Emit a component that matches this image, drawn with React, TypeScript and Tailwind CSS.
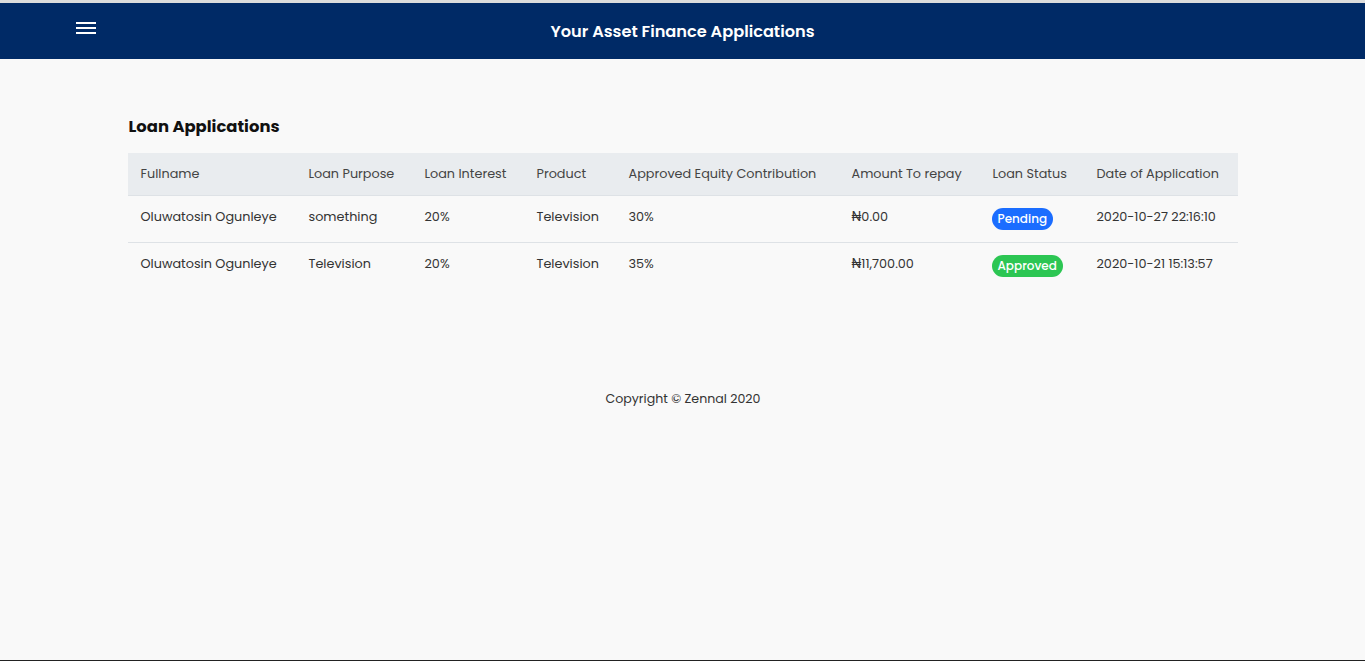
import React from "react";

const rows = [
  {
    name: "Oluwatosin Ogunleye",
    purpose: "something",
    interest: "20%",
    product: "Television",
    equity: "30%",
    amount: "₦0.00",
    status: "Pending",
    date: "2020-10-27 22:16:10",
  },
  {
    name: "Oluwatosin Ogunleye",
    purpose: "Television",
    interest: "20%",
    product: "Television",
    equity: "35%",
    amount: "₦11,700.00",
    status: "Approved",
    date: "2020-10-21 15:13:57",
  },
];

const columns = [
  { label: "Fullname", w: "w-[168px]" },
  { label: "Loan Purpose", w: "w-[116px]" },
  { label: "Loan Interest", w: "w-[112px]" },
  { label: "Product", w: "w-[92px]" },
  { label: "Approved Equity Contribution", w: "w-[223px]" },
  { label: "Amount To repay", w: "w-[141px]" },
  { label: "Loan Status", w: "w-[104px]" },
  { label: "Date of Application", w: "w-[154px]" },
];

export default function App() {
  return (
    <div className="flex min-h-[661px] flex-col bg-[#f9f9f9] font-['Poppins','Inter',sans-serif] text-[#333]">
      {/* Top bar */}
      <div className="h-[3px] bg-[#dcdcdc]" />
      <header className="relative flex h-[56px] items-center justify-center bg-[#002a66] pt-[2px]">
        <button className="absolute left-[76px] top-[19px] flex flex-col gap-[3px]">
          <span className="block h-[2px] w-[20px] bg-white" />
          <span className="block h-[2px] w-[20px] bg-white" />
          <span className="block h-[2px] w-[20px] bg-white" />
        </button>
        <h1 className="text-[16.2px] font-semibold text-white">Your Asset Finance Applications</h1>
      </header>

      <main className="flex-1">
        <div className="mx-auto w-[1110px] pt-[55px]">
          <h2 className="pl-[1px] text-[16.4px] font-bold leading-[26px] text-[#111]">Loan Applications</h2>
          <table className="mt-[13px] w-full table-fixed border-collapse text-[12.8px]">
            <colgroup>
              {columns.map((c) => (
                <col key={c.label} className={c.w} />
              ))}
            </colgroup>
            <thead>
              <tr className="h-[42px] border-b border-[#dee2e6] bg-[#e9ecef]">
                {columns.map((c) => (
                  <th key={c.label} className="pl-[13px] pr-3 text-left font-normal text-[#444]">
                    {c.label}
                  </th>
                ))}
              </tr>
            </thead>
            <tbody>
              {rows.map((r, i) => (
                <tr key={i} className="h-[47px] border-b border-[#dee2e6] last:border-b-0">
                  <td className="pl-[13px] pr-3 align-top pt-[11px]">{r.name}</td>
                  <td className="pl-[13px] pr-3 align-top pt-[11px]">{r.purpose}</td>
                  <td className="pl-[13px] pr-3 align-top pt-[11px]">{r.interest}</td>
                  <td className="pl-[13px] pr-3 align-top pt-[11px]">{r.product}</td>
                  <td className="pl-[13px] pr-3 align-top pt-[11px]">{r.equity}</td>
                  <td className="pl-[13px] pr-3 align-top pt-[11px]">{r.amount}</td>
                  <td className="pl-3 pr-3 align-top pt-[12px]">
                    <span
                      className={
                        r.status === "Pending"
                          ? "inline-block rounded-full bg-[#1b6dff] px-[6px] py-[2px] text-[12px] font-medium leading-[18px] text-white"
                          : "inline-block rounded-full bg-[#2cc653] px-[6px] py-[2px] text-[12px] font-medium leading-[18px] text-white"
                      }
                    >
                      {r.status}
                    </span>
                  </td>
                  <td className="pl-[13px] pr-3 align-top pt-[11px]">{r.date}</td>
                </tr>
              ))}
            </tbody>
          </table>
        </div>

        <footer className="mt-[101px] pl-[1px] text-center text-[12.6px] text-[#333]">Copyright © Zennal 2020</footer>
      </main>
      <div className="h-[1px] bg-[#222]" />
    </div>
  );
}
